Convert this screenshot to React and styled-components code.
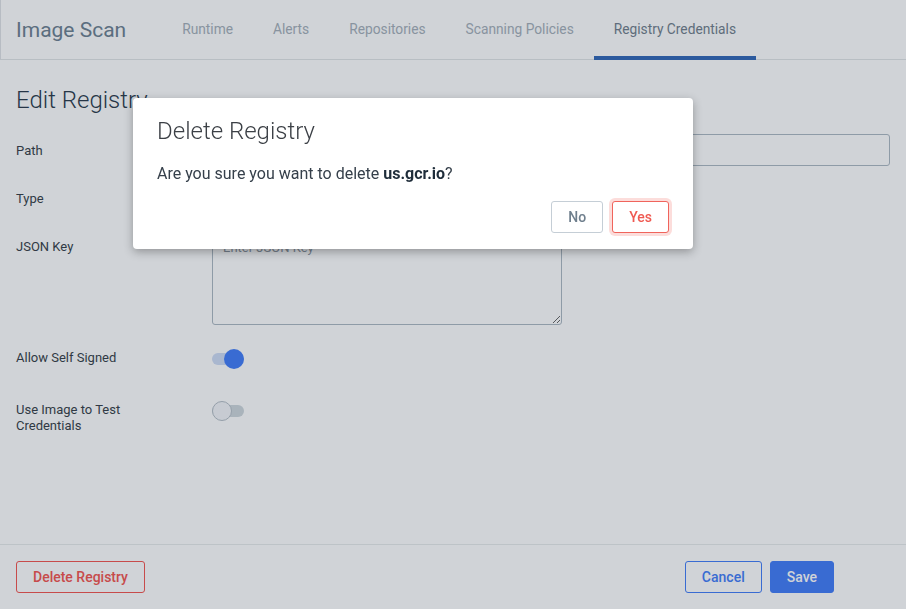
import { createGlobalStyle } from 'styled-components'
import styled from 'styled-components'

const GlobalStyle = createGlobalStyle`
  html, body {
    margin: 0;
    padding: 0;
    background: #ffffff;
    font-family: Roboto, 'Liberation Sans', sans-serif;
  }
  * {
    box-sizing: border-box;
  }
`

const tabs = [
  { id: 'runtime', label: 'Runtime' },
  { id: 'alerts', label: 'Alerts' },
  { id: 'repositories', label: 'Repositories' },
  { id: 'policies', label: 'Scanning Policies' },
  { id: 'credentials', label: 'Registry Credentials', active: true }
]

const Toggle = ({ on }) => (
  <ToggleWrap>
    <ToggleTrack on={on ? 1 : 0}>
      <ToggleKnob on={on ? 1 : 0} />
    </ToggleTrack>
  </ToggleWrap>
)

const App = () => {
  return (
    <>
      <GlobalStyle />
      <Page>
        <Header>
          <Title>Image Scan</Title>
          <Tabs>
            {tabs.map(({ id, label, active }) => (
              <Tab key={id} active={active ? 1 : 0}>
                {label}
              </Tab>
            ))}
          </Tabs>
        </Header>
        <Main>
          <Heading>Edit Registry</Heading>
          <Form>
            <Label>Path</Label>
            <Field>
              <TextInput defaultValue="us.gcr.io" />
            </Field>
            <Label>Type</Label>
            <Field>
              <SelectBox>Docker V2</SelectBox>
            </Field>
            <Label>JSON Key</Label>
            <Field>
              <TextArea placeholder="Enter JSON Key" />
            </Field>
            <Label>Allow Self Signed</Label>
            <Toggle on />
            <Label>Use Image to Test Credentials</Label>
            <Toggle />
          </Form>
        </Main>
        <Footer>
          <Button variant="danger">Delete Registry</Button>
          <FooterActions>
            <Button variant="outline">Cancel</Button>
            <Button variant="primary">Save</Button>
          </FooterActions>
        </Footer>
      </Page>
      <Backdrop>
        <Modal>
          <ModalTitle>Delete Registry</ModalTitle>
          <ModalBody>
            Are you sure you want to delete <strong>us.gcr.io</strong>?
          </ModalBody>
          <ModalActions>
            <ModalButton>No</ModalButton>
            <ModalButton danger>Yes</ModalButton>
          </ModalActions>
        </Modal>
      </Backdrop>
    </>
  )
}

const Page = styled('div')({
  height: '100vh',
  display: 'flex',
  flexDirection: 'column',
  background: '#ffffff'
})

const Header = styled('header')({
  height: 60,
  flexShrink: 0,
  display: 'flex',
  alignItems: 'stretch',
  borderLeft: '1px solid #e0e3e6',
  borderBottom: '1px solid #e2e5e7'
})

const Title = styled('div')({
  display: 'flex',
  alignItems: 'center',
  padding: '0 16px 0 15px',
  fontSize: 21,
  color: '#6d8191'
})

const Tabs = styled('nav')({
  display: 'flex',
  marginLeft: 20
})

const Tab = styled('div')(({ active }) => ({
  display: 'flex',
  alignItems: 'center',
  padding: '0 20px 2px',
  marginBottom: -1,
  fontSize: 13.75,
  color: active ? '#727f8d' : '#a6b0ba',
  boxShadow: active ? 'inset 0 -4px 0 #3268b8' : 'none'
}))

const Main = styled('main')({
  flex: 1,
  padding: '24px 16px 0'
})

const Heading = styled('h2')({
  margin: '0 0 18px',
  fontSize: 24,
  lineHeight: '32px',
  fontWeight: 300,
  color: '#2b3b4c'
})

const Form = styled('div')({
  display: 'grid',
  gridTemplateColumns: '196px 1fr',
  rowGap: 16,
  alignItems: 'start'
})

const Label = styled('label')({
  paddingTop: 9,
  maxWidth: 140,
  fontSize: 13,
  lineHeight: '16px',
  color: '#373f48'
})

const Field = styled('div')({
  display: 'flex'
})

const inputBase = {
  height: 32,
  border: '1px solid #adb9c3',
  borderRadius: 3,
  background: '#ffffff',
  fontFamily: 'Roboto, "Liberation Sans", sans-serif',
  fontSize: 13,
  color: '#333d47',
  padding: '0 10px'
}

const TextInput = styled('input')({
  ...inputBase,
  width: '100%',
  outline: 'none'
})

const SelectBox = styled('div')({
  ...inputBase,
  width: 350,
  display: 'flex',
  alignItems: 'center'
})

const TextArea = styled('textarea')({
  ...inputBase,
  width: 350,
  height: 95,
  padding: '8px 10px',
  lineHeight: '18px',
  outline: 'none',
  '&::placeholder': {
    color: '#8c969f'
  }
})

const ToggleWrap = styled('div')({
  height: 36,
  display: 'flex',
  alignItems: 'center'
})

const ToggleTrack = styled('div')(({ on }) => ({
  position: 'relative',
  width: 32,
  height: 12,
  borderRadius: 6,
  background: on ? '#cfdcf6' : '#cfd8dd'
}))

const ToggleKnob = styled('span')(({ on }) => ({
  position: 'absolute',
  top: -4,
  left: on ? 12 : 0,
  width: 20,
  height: 20,
  borderRadius: '50%',
  background: on ? '#437ef9' : '#f4f6f9',
  border: on ? 'none' : '1px solid #b6bfc7'
}))

const Footer = styled('footer')({
  height: 65,
  flexShrink: 0,
  display: 'flex',
  alignItems: 'center',
  justifyContent: 'space-between',
  padding: '0 72px 0 16px',
  borderTop: '1px solid #e8ebec'
})

const FooterActions = styled('div')({
  display: 'flex',
  gap: 8
})

const buttonVariants = {
  danger: { color: '#f45550', border: '1px solid #f45550', background: '#ffffff' },
  outline: { color: '#437ef9', border: '1px solid #437ef9', background: '#ffffff' },
  primary: { color: '#ffffff', border: '1px solid #437ef9', background: '#437ef9' }
}

const Button = styled('button')(({ variant }) => ({
  height: 32,
  padding: '0 16px',
  borderRadius: 3,
  fontFamily: 'Roboto, "Liberation Sans", sans-serif',
  fontSize: 14,
  fontWeight: 500,
  ...buttonVariants[variant]
}))

const Backdrop = styled('div')({
  position: 'fixed',
  inset: 0,
  background: 'rgba(20, 35, 55, 0.2)'
})

const Modal = styled('div')({
  position: 'absolute',
  top: 98,
  left: 133,
  width: 560,
  padding: '19px 24px 16px',
  background: '#ffffff',
  borderRadius: 4,
  boxShadow: '0 3px 10px rgba(0, 0, 0, 0.3)'
})

const ModalTitle = styled('h3')({
  margin: '0 0 17px',
  fontSize: 24,
  lineHeight: '28px',
  fontWeight: 300,
  color: '#3c4046'
})

const ModalBody = styled('p')({
  margin: '0 0 15px',
  fontSize: 16,
  lineHeight: '24px',
  color: '#36404b',
  '& strong': {
    fontWeight: 700,
    color: '#1f2d3a'
  }
})

const ModalActions = styled('div')({
  display: 'flex',
  justifyContent: 'flex-end',
  gap: 9
})

const ModalButton = styled('button')(({ danger }) => ({
  height: 32,
  padding: '0 16px',
  borderRadius: 3,
  background: '#ffffff',
  fontFamily: 'Roboto, "Liberation Sans", sans-serif',
  fontSize: 14,
  fontWeight: 500,
  color: danger ? '#ef5a52' : '#6f7f8d',
  border: danger ? '1px solid #f0645c' : '1px solid #c5ced6',
  boxShadow: danger ? '0 0 0 3px rgba(240, 100, 92, 0.22)' : 'none'
}))

export default App
